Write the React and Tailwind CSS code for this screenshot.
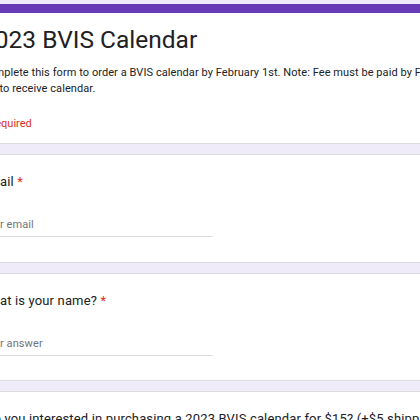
import React from 'react';

const QUESTIONS = [
  { label: 'Email', placeholder: 'Your email', pb: 'pb-[25px]' },
  { label: 'What is your name?', placeholder: 'Your answer', pb: 'pb-[24px]' },
];

function Card({ children, className = '' }) {
  return (
    <div className={`bg-white border border-[#dadce0] rounded-lg px-[20px] ${className}`}>
      {children}
    </div>
  );
}

export default function App() {
  return (
    <div className="w-[420px] h-[420px] overflow-hidden bg-[#f0ebf8] pt-[4px] font-['Roboto',sans-serif] text-[#202124]">
      <div className="-ml-[40px] w-[560px] flex flex-col gap-[10px]">
        {/* Header */}
        <div className="bg-white border-x border-b border-[#dadce0] rounded-lg overflow-hidden">
          <div className="h-[9px] bg-[#673ab7]" />
          <div className="px-[20px] pt-[11px] pb-[11px]">
            <div className="text-[24.5px] leading-[32px]">2023 BVIS Calendar</div>
            <div className="mt-[9px] text-[11px] leading-[16px] tracking-[0.07px]">
              <div className="whitespace-nowrap">
                Complete this form to order a BVIS calendar by February 1st. Note: Fee must be paid by February
              </div>
              <div className="whitespace-nowrap">1st to receive calendar.</div>
            </div>
            <div className="mt-[19px] text-[11px] leading-[16px] text-[#d93025]">* Required</div>
          </div>
        </div>

        {QUESTIONS.map((q) => (
          <Card key={q.label} className={`pt-[19px] ${q.pb}`}>
            <div className="text-[13px] leading-[16px] tracking-[0.15px] whitespace-nowrap">
              {q.label} <span className="text-[#d93025]">*</span>
            </div>
            <div className="mt-[27px] w-[232px] pb-[3px] border-b border-[#dadce0] text-[11px] leading-[16px] tracking-[0.1px] text-[#70757a]">
              {q.placeholder}
            </div>
          </Card>
        ))}

        <Card className="pt-[19px] pb-[40px]">
          <div className="text-[13px] leading-[16px] tracking-[0.15px] whitespace-nowrap">
            Are you interested in purchasing a 2023 BVIS calendar for $15? (+$5 shipping fee) <span className="text-[#d93025]">*</span>
          </div>
        </Card>
      </div>
    </div>
  );
}
